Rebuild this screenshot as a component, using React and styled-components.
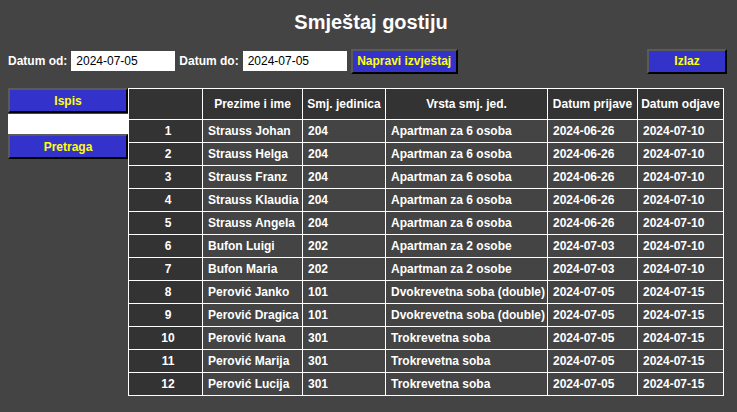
import styled, { createGlobalStyle } from "styled-components";

const GlobalStyle = createGlobalStyle`
    html, body {
        margin: 0;
        padding: 0;
        background: #444444;
        font-family: "Liberation Sans", Arial, sans-serif;
    }
`;

const Page = styled.div`
    padding: 11px 10px 0 8px;
    color: #ffffff;
`;

const Title = styled.h1`
    margin: 0 0 0 7px;
    font-size: 20px;
    line-height: 23px;
    font-weight: bold;
    text-align: center;
`;

const Toolbar = styled.div`
    margin-top: 14px;
    height: 26px;
    display: flex;
    align-items: center;
`;

const Label = styled.label`
    font-size: 12px;
    font-weight: bold;
    line-height: 14px;
    margin-right: 4px;
`;

const DateInput = styled.input`
    box-sizing: border-box;
    width: 104px;
    height: 20px;
    border: none;
    outline: none;
    padding: 0 5px;
    margin-right: 4px;
    background: #ffffff;
    color: #000000;
    font-family: "Liberation Sans", Arial, sans-serif;
    font-size: 12px;
`;

const Button = styled.button`
    box-sizing: border-box;
    width: ${(p) => p.$width}px;
    height: 25px;
    padding: 0;
    border: 2px solid;
    border-color: #5a5a5a #000000 #000000 #5a5a5a;
    background: #3333cc;
    color: #ffff00;
    font-family: "Liberation Sans", Arial, sans-serif;
    font-size: 12px;
    font-weight: bold;
    cursor: pointer;
`;

const Spacer = styled.div`
    flex: 1;
`;

const Main = styled.div`
    margin-top: 14px;
    display: flex;
    align-items: flex-start;
`;

const Side = styled.div`
    width: 120px;
    display: flex;
    flex-direction: column;
`;

const SearchInput = styled.input`
    box-sizing: border-box;
    width: 120px;
    height: 20px;
    margin: 1px 0 0;
    border: none;
    outline: none;
    background: #ffffff;
`;

const Table = styled.table`
    width: 596px;
    border-collapse: collapse;
    table-layout: fixed;
    border: 1px solid #ffffff;
    font-size: 12px;
    font-weight: bold;
    color: #ffffff;
`;

const Th = styled.th`
    height: 30px;
    padding: 0;
    border: 1px solid #ffffff;
    background: #333333;
    text-align: center;
    vertical-align: middle;
    white-space: nowrap;
    overflow: hidden;
`;

const Td = styled.td`
    height: 21px;
    padding: 0 0 1px 5px;
    border: 1px solid #ffffff;
    background: ${(p) => (p.$num ? "#333333" : "transparent")};
    text-align: ${(p) => (p.$num ? "center" : "left")};
    vertical-align: middle;
    white-space: nowrap;
    overflow: hidden;
`;

const widths = [74, 100, 83, 162, 90, 86];

const headers = ["", "Prezime i ime", "Smj. jedinica", "Vrsta smj. jed.", "Datum prijave", "Datum odjave"];

const guests = [
    ["Strauss Johan", "204", "Apartman za 6 osoba", "2024-06-26", "2024-07-10"],
    ["Strauss Helga", "204", "Apartman za 6 osoba", "2024-06-26", "2024-07-10"],
    ["Strauss Franz", "204", "Apartman za 6 osoba", "2024-06-26", "2024-07-10"],
    ["Strauss Klaudia", "204", "Apartman za 6 osoba", "2024-06-26", "2024-07-10"],
    ["Strauss Angela", "204", "Apartman za 6 osoba", "2024-06-26", "2024-07-10"],
    ["Bufon Luigi", "202", "Apartman za 2 osobe", "2024-07-03", "2024-07-10"],
    ["Bufon Maria", "202", "Apartman za 2 osobe", "2024-07-03", "2024-07-10"],
    ["Perović Janko", "101", "Dvokrevetna soba (double)", "2024-07-05", "2024-07-15"],
    ["Perović Dragica", "101", "Dvokrevetna soba (double)", "2024-07-05", "2024-07-15"],
    ["Perović Ivana", "301", "Trokrevetna soba", "2024-07-05", "2024-07-15"],
    ["Perović Marija", "301", "Trokrevetna soba", "2024-07-05", "2024-07-15"],
    ["Perović Lucija", "301", "Trokrevetna soba", "2024-07-05", "2024-07-15"],
];

const App = () => {
    return (
        <>
            <GlobalStyle />
            <Page>
                <Title>Smještaj gostiju</Title>
                <Toolbar>
                    <Label>Datum od:</Label>
                    <DateInput defaultValue="2024-07-05" />
                    <Label>Datum do:</Label>
                    <DateInput defaultValue="2024-07-05" />
                    <Button $width={107}>Napravi izvještaj</Button>
                    <Spacer />
                    <Button $width={80}>Izlaz</Button>
                </Toolbar>
                <Main>
                    <Side>
                        <Button $width={120}>Ispis</Button>
                        <SearchInput />
                        <Button $width={120}>Pretraga</Button>
                    </Side>
                    <Table>
                        <colgroup>
                            {widths.map((w, i) => (
                                <col key={i} style={{ width: w }} />
                            ))}
                        </colgroup>
                        <thead>
                            <tr>
                                {headers.map((h, i) => (
                                    <Th key={i}>{h}</Th>
                                ))}
                            </tr>
                        </thead>
                        <tbody>
                            {guests.map((g, i) => (
                                <tr key={i}>
                                    <Td $num>{i + 1}</Td>
                                    {g.map((cell, j) => (
                                        <Td key={j}>{cell}</Td>
                                    ))}
                                </tr>
                            ))}
                        </tbody>
                    </Table>
                </Main>
            </Page>
        </>
    );
};

export default App;
